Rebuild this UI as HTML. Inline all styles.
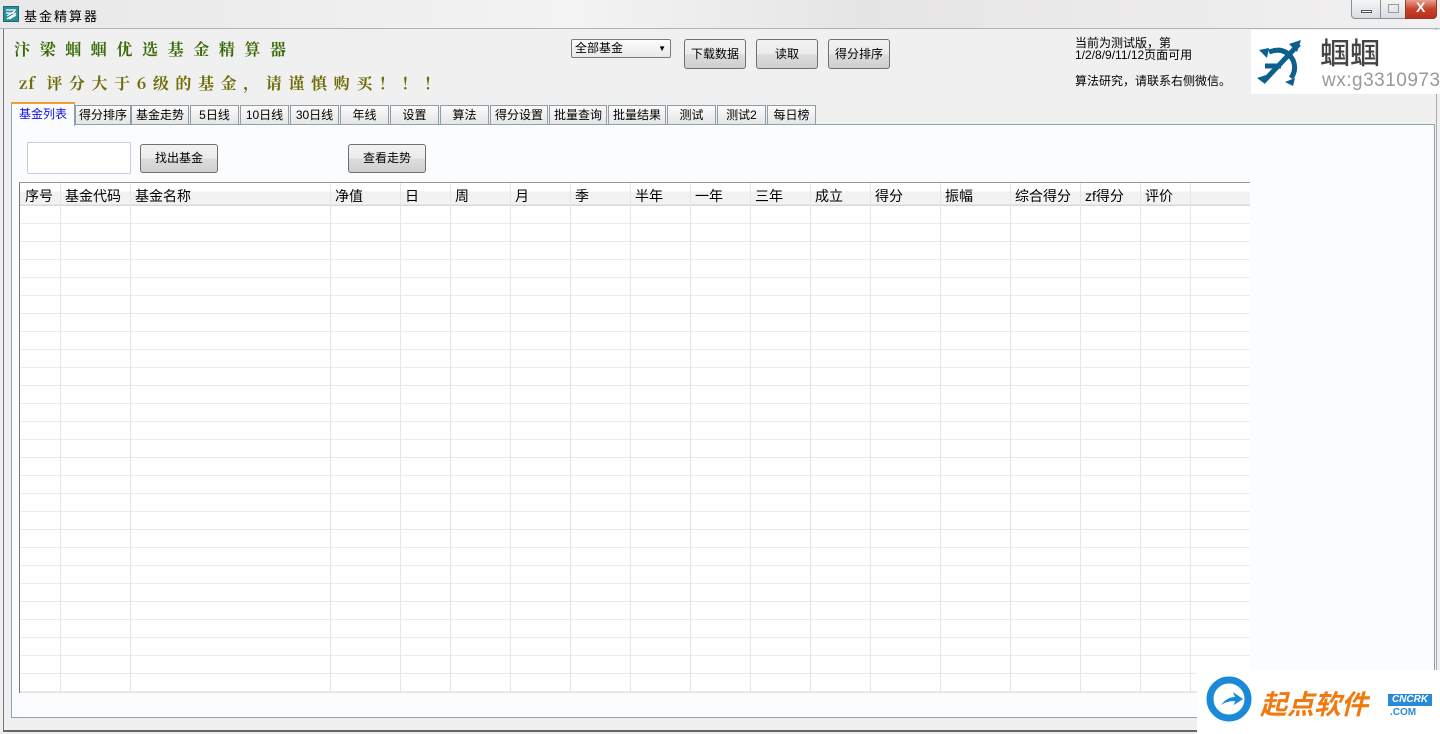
<!DOCTYPE html>
<html><head><meta charset="utf-8"><style>
*{margin:0;padding:0;box-sizing:border-box}
body{width:1440px;height:734px;overflow:hidden;background:#f0efef;font-family:"Liberation Sans","Noto Sans CJK SC",sans-serif;font-size:12px;color:#000;position:relative}
.a{position:absolute}
.title{left:0;top:0;width:1440px;height:29px;background:linear-gradient(90deg,#e9e8e8,#f4f3f3 40%,#e6e5e5 60%,#f2f1f1);border-bottom:1px solid #a9b4bb}
.client{left:3px;top:29px;width:1434px;height:703px;background:#f0f0f0;border-left:1px solid #777;border-right:1px solid #aaa;border-bottom:2px solid #666}
.btn{position:absolute;border:1px solid #707070;border-radius:3px;background:linear-gradient(#f2f2f2,#ebebeb 50%,#dddddd 51%,#cfcfcf);text-align:center;font-size:12px}
.tab{position:absolute;top:105px;height:20px;border:1px solid #8d9ea8;border-bottom:none;background:linear-gradient(#fbfbfb,#e4e4e4);text-align:center;line-height:19px;font-size:12px}
.big{font-family:"Noto Serif CJK SC","Liberation Serif",serif;font-weight:bold;font-size:16px}
.vl{position:absolute;top:183px;width:1px;height:509px;background:#e6e6e6}
</style></head><body>
<div class="a title"></div>
<svg class="a" style="left:3px;top:6px" width="16" height="16" viewBox="0 0 16 16"><rect x="0.5" y="0.5" width="15" height="15" fill="#2d8f9a" stroke="#1e6670"/><path d="M3 4h10M3 7h8M4 10l8-5M4 13l9-6M6 13l7-4" stroke="#fff" stroke-width="1.3" fill="none"/></svg>
<div class="a" style="left:24px;top:6px;font-size:13px;letter-spacing:2px">基金精算器</div>
<div class="a" style="left:1351px;top:0;width:30px;height:19px;border:1px solid #8a8f96;border-top:none;border-radius:0 0 0 4px;background:linear-gradient(#f5f5f5,#d8dde3)"><div class="a" style="left:9px;top:10px;width:11px;height:3px;border:1px solid #555;background:#fff"></div></div>
<div class="a" style="left:1380px;top:0;width:26px;height:19px;border:1px solid #8a8f96;border-top:none;background:linear-gradient(#f5f5f5,#d8dde3)"><div class="a" style="left:7px;top:4px;width:11px;height:9px;border:1px solid #999"></div></div>
<div class="a" style="left:1405px;top:0;width:32px;height:19px;border:1px solid #8a3a30;border-top:none;border-radius:0 0 4px 0;background:linear-gradient(#e8a090,#c8422a 50%,#b8301c)"><div class="a" style="left:10px;top:-1px;color:#fff;font-weight:bold;font-size:14px">X</div></div>
<div class="a client"></div>
<div class="a big" style="left:14px;top:37px;color:#3a6a08;letter-spacing:9.6px">汴梁蝈蝈优选基金精算器</div>
<div class="a big" style="left:19px;top:71px;color:#6e6a05;white-space:nowrap"><span style="letter-spacing:1px">zf</span><span style="letter-spacing:6.6px"> 评分大于6级的基金，请谨慎购买！！！</span></div>
<div class="a" style="left:571px;top:39px;width:100px;height:19px;border:1px solid #7a7a7a;border-radius:2px;background:linear-gradient(#fdfdfd,#e8e8e8);padding-left:3px;line-height:17px">全部基金<span class="a" style="right:4px;top:0;font-size:8px">▼</span></div>
<div class="btn" style="left:684px;top:39px;width:62px;height:30px;line-height:28px">下载数据</div>
<div class="btn" style="left:756px;top:39px;width:62px;height:30px;line-height:28px">读取</div>
<div class="btn" style="left:828px;top:39px;width:62px;height:30px;line-height:28px">得分排序</div>
<div class="a" style="left:1075px;top:37px;line-height:12px;font-size:12px">当前为测试版，第<br>1/2/8/9/11/12页面可用</div>
<div class="a" style="left:1075px;top:72px">算法研究，请联系右侧微信。</div>
<div class="a" style="left:1251px;top:30px;width:189px;height:64px;background:#fff"></div>
<svg class="a" style="left:1255px;top:38px" width="52" height="50" viewBox="0 0 52 50"><g fill="none" stroke="#0d5f8e" stroke-width="5"><path d="M14 14 Q30 8 38 22 Q42 32 36 40"/><path d="M8 44 L44 6"/><path d="M10 28 L26 28"/></g><path d="M46 2 L34 6 L42 14Z M30 44 L40 40 L38 48Z M4 12 L14 10 L12 20Z M2 40 L10 46 L14 36Z" fill="#0d5f8e"/></svg>
<div class="a" style="left:1320px;top:32px;font-size:30px;font-weight:500;color:#444;font-family:'Noto Sans CJK SC',sans-serif;line-height:38px">蝈蝈</div>
<div class="a" style="left:1322px;top:70px;font-size:19px;color:#999;letter-spacing:0.5px">wx:g3310973</div>
<div class="tab" style="left:75px;width:56px">得分排序</div>
<div class="tab" style="left:131px;width:58px">基金走势</div>
<div class="tab" style="left:190px;width:49px">5日线</div>
<div class="tab" style="left:240px;width:49px">10日线</div>
<div class="tab" style="left:290px;width:49px">30日线</div>
<div class="tab" style="left:340px;width:49px">年线</div>
<div class="tab" style="left:390px;width:49px">设置</div>
<div class="tab" style="left:440px;width:49px">算法</div>
<div class="tab" style="left:490px;width:58px">得分设置</div>
<div class="tab" style="left:549px;width:58px">批量查询</div>
<div class="tab" style="left:608px;width:58px">批量结果</div>
<div class="tab" style="left:667px;width:49px">测试</div>
<div class="tab" style="left:717px;width:49px">测试2</div>
<div class="tab" style="left:767px;width:49px">每日榜</div>
<div class="a" style="left:11px;top:124px;width:1424px;height:594px;border:1px solid #8fa3ad;background:#fbfcfd"></div>
<div class="a" style="left:11px;top:102px;width:64px;height:24px;border:1px solid #8fa3ad;border-top:2px solid #f0a030;border-bottom:none;background:#fbfcfd;color:#1010e0;text-align:center;line-height:21px">基金列表</div>
<div class="a" style="left:27px;top:142px;width:104px;height:32px;border:1px solid #ccd;background:#fff;border-radius:2px"></div>
<div class="btn" style="left:140px;top:144px;width:78px;height:29px;line-height:27px">找出基金</div>
<div class="btn" style="left:348px;top:144px;width:78px;height:29px;line-height:27px">查看走势</div>
<div class="a" style="left:19px;top:182px;width:1231px;height:511px;border-left:1px solid #777;border-top:1px solid #999;background:#fff"></div>
<div class="a" style="left:20px;top:183px;width:1230px;height:23px;background:linear-gradient(#fff 0 8px,#f2f2f2 9px,#f2f2f2 21px,#d8d8d8 22px)"></div>
<div class="a" style="left:20px;top:206px;width:1230px;height:486px;background:repeating-linear-gradient(#fff 0 17px,#ebebeb 17px 18px)"></div>
<div class="a" style="left:20px;top:692px;width:1230px;height:1px;background:#e4e4e4"></div>
<div class="a" style="left:0;top:186px;font-size:14px;width:1250px;height:20px">
<span class="a" style="left:25px">序号</span><span class="a" style="left:65px">基金代码</span><span class="a" style="left:135px">基金名称</span><span class="a" style="left:335px">净值</span><span class="a" style="left:405px">日</span><span class="a" style="left:455px">周</span><span class="a" style="left:515px">月</span><span class="a" style="left:575px">季</span><span class="a" style="left:635px">半年</span><span class="a" style="left:695px">一年</span><span class="a" style="left:755px">三年</span><span class="a" style="left:815px">成立</span><span class="a" style="left:875px">得分</span><span class="a" style="left:945px">振幅</span><span class="a" style="left:1015px">综合得分</span><span class="a" style="left:1085px">zf得分</span><span class="a" style="left:1145px">评价</span>
</div>
<div class="vl" style="left:60px"></div><div class="vl" style="left:130px"></div><div class="vl" style="left:330px"></div><div class="vl" style="left:400px"></div><div class="vl" style="left:450px"></div><div class="vl" style="left:510px"></div><div class="vl" style="left:570px"></div><div class="vl" style="left:630px"></div><div class="vl" style="left:690px"></div><div class="vl" style="left:750px"></div><div class="vl" style="left:810px"></div><div class="vl" style="left:870px"></div><div class="vl" style="left:940px"></div><div class="vl" style="left:1010px"></div><div class="vl" style="left:1080px"></div><div class="vl" style="left:1140px"></div><div class="vl" style="left:1190px"></div>
<div class="a" style="left:1197px;top:670px;width:243px;height:64px;background:#fff"></div>
<svg class="a" style="left:1205px;top:675px" width="48" height="48" viewBox="0 0 48 48"><circle cx="24" cy="24" r="19" fill="none" stroke="#1a8ad8" stroke-width="7"/><path d="M16 30 Q22 22 30 22 L28 17 L38 24 L29 30 L30 26 Q22 26 16 30Z" fill="#1a8ad8"/></svg>
<div class="a" style="left:1260px;top:686px;font-size:27px;font-weight:bold;font-style:italic;color:#f07a10;font-family:'Noto Sans CJK SC',sans-serif;line-height:34px">起点软件</div>
<div class="a" style="left:1388px;top:694px;width:44px;height:12px;background:#2a8ad8;color:#fff;font-size:10px;font-weight:bold;font-style:italic;text-align:center;line-height:12px">CNCRK</div>
<div class="a" style="left:1390px;top:707px;font-size:10px;color:#2a8ad8;font-weight:bold">.COM</div>
</body></html>
